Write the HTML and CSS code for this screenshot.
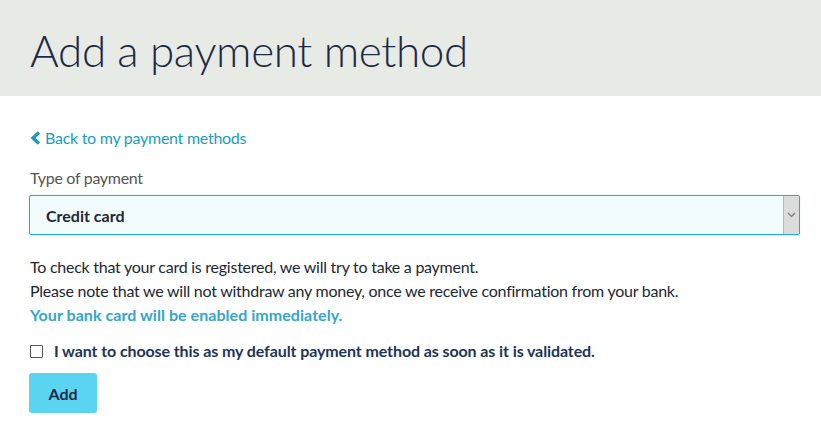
FILE: index.html
```html
<!DOCTYPE html>
<html>
<head>
<meta charset="utf-8">
<link rel="stylesheet" href="styles.css">
</head>
<body>
<header class="hero">
  <h1 class="hero-title">Add a payment method</h1>
</header>
<main class="content">
  <a class="back-link" href="#">
    <svg class="chev" width="11" height="14" viewBox="0 0 11 14"><path d="M9 1.5 L3 7 L9 12.5" fill="none" stroke="currentColor" stroke-width="3.4"/></svg>
    Back to my payment methods
  </a>
  <label class="field-label">Type of payment</label>
  <div class="select">
    <span class="select-value">Credit card</span>
    <span class="select-arrow">
      <svg width="9" height="6" viewBox="0 0 9 6"><path d="M1 1 L4.5 4.5 L8 1" fill="none" stroke="#777" stroke-width="1.2"/></svg>
    </span>
  </div>
  <div class="info">
    <p>To check that your card is registered, we will try to take a payment.</p>
    <p>Please note that we will not withdraw any money, once we receive confirmation from your bank.</p>
    <p class="info-strong">Your bank card will be enabled immediately.</p>
  </div>
  <label class="check">
    <span class="check-box"></span>
    <span class="check-text">I want to choose this as my default payment method as soon as it is validated.</span>
  </label>
  <button class="btn">Add</button>
</main>
</body>
</html>
```
FILE: styles.css
```css
* { box-sizing: border-box; }
body {
  margin: 0;
  background: #fff;
  font-family: "Lato", "Open Sans", sans-serif;
  color: #1c2733;
}
.hero {
  background: #e8eae6;
  height: 96px;
  padding: 24px 30px 0;
}
.hero-title {
  margin: 0;
  font-weight: 300;
  font-size: 44px;
  line-height: 52px;
  color: #1c2b45;
  letter-spacing: -0.35px;
}
.content {
  padding: 30px 21px 0 29px;
  display: flex;
  flex-direction: column;
  align-items: flex-start;
}
.back-link {
  display: flex;
  align-items: center;
  gap: 4px;
  color: #1a9cbf;
  text-decoration: none;
  font-size: 16px;
  line-height: 24px;
  letter-spacing: -0.27px;
  margin-left: 1px;
}
.chev { display: block; }
.field-label {
  margin-top: 16px;
  font-size: 16px;
  line-height: 24px;
  letter-spacing: -0.3px;
  color: #555;
  margin-left: 1px;
}
.select {
  margin-top: 5px;
  width: 100%;
  height: 40px;
  border: 1px solid #1fb1d3;
  border-radius: 2px;
  background: #f2fbfe;
  display: flex;
  align-items: stretch;
  box-shadow: 0 0 1px rgba(31,177,211,0.5);
}
.select-value {
  flex: 1;
  display: flex;
  align-items: center;
  padding-left: 16px;
  font-weight: 700;
  font-size: 16px;
  color: #1c2733;
}
.select-arrow {
  width: 16px;
  background: #dcdcdc;
  border-left: 1px solid #b8b8b8;
  display: flex;
  align-items: center;
  justify-content: center;
}
.info {
  margin-top: 20px;
  font-size: 16px;
  line-height: 24px;
  letter-spacing: -0.25px;
  color: #1c2733;
  margin-left: 1px;
}
.info p { margin: 0; }
.info-strong { color: #35a5c9; font-weight: 700; letter-spacing: 0.05px; }
.check {
  margin-top: 12px;
  display: flex;
  align-items: center;
  gap: 11px;
  margin-left: 1px;
}
.check-box {
  width: 13px;
  height: 13px;
  border: 1px solid #555;
  border-radius: 1px;
  background: #fff;
}
.check-text {
  font-weight: 700;
  font-size: 16px;
  line-height: 24px;
  letter-spacing: -0.1px;
  color: #1c3556;
}
.btn {
  margin-top: 10px;
  width: 68px;
  height: 40px;
  border: none;
  border-radius: 3px;
  background: #5ad4f0;
  font-family: inherit;
  font-weight: 700;
  font-size: 16px;
  color: #1c2b45;
  cursor: pointer;
}
```
